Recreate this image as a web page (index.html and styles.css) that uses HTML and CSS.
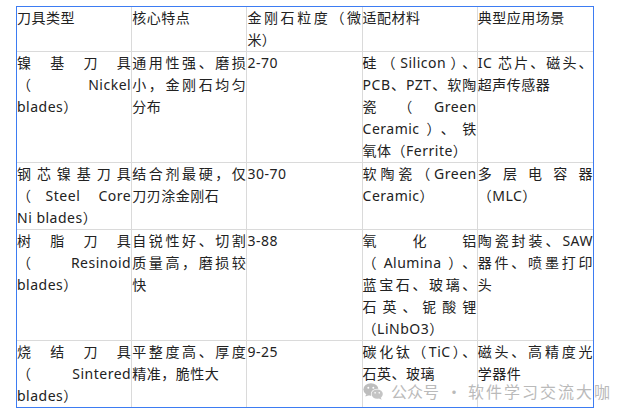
FILE: index.html
```html
<!DOCTYPE html>
<html lang="zh-CN">
<head>
<meta charset="utf-8">
<title>刀具类型</title>
<link rel="stylesheet" href="styles.css">
</head>
<body>
<div class="page">
  <table class="spec">
    <tr>
      <td>刀具类型</td>
      <td>核心特点</td>
      <td>金刚石粒度（微米）</td>
      <td>适配材料</td>
      <td>典型应用场景</td>
    </tr>
    <tr>
      <td>镍基刀具（Nickel blades）</td>
      <td>通用性强、磨损小，金刚石均匀分布</td>
      <td>2-70</td>
      <td>硅（Silicon）、PCB、PZT、软陶瓷（Green Ceramic）、铁<span class="nw">氧体</span>（Ferrite）</td>
      <td>IC 芯片、磁头、超声传感器</td>
    </tr>
    <tr>
      <td>钢芯镍基刀具（Steel Core Ni&nbsp;blades）</td>
      <td>结合剂最硬，仅刀刃涂金刚石</td>
      <td>30-70</td>
      <td>软陶瓷（Green Ceramic）</td>
      <td>多层电容器（MLC）</td>
    </tr>
    <tr>
      <td>树脂刀具（Resinoid blades）</td>
      <td>自锐性好、切割质量高，磨损较快</td>
      <td>3-88</td>
      <td>氧化铝（Alumina）、<span class="nw">蓝宝石</span>、玻璃、石英、铌酸锂（LiNbO3）</td>
      <td>陶瓷封装、SAW器件、喷墨打印头</td>
    </tr>
    <tr>
      <td>烧结刀具（Sintered blades）</td>
      <td>平整度高、厚度精准，脆性大</td>
      <td>9-25</td>
      <td>碳化钛（TiC）、石英、玻璃</td>
      <td>磁头、高精度光学器件</td>
    </tr>
  </table>
  <div class="mark">
    <svg class="wx" width="21" height="17" viewBox="0 0 23 19" aria-hidden="true">
      <ellipse cx="8.6" cy="7.2" rx="8.4" ry="7.0" fill="#bdbdbd"/>
      <path d="M3.2 12.2 L2.4 15.2 L6.4 13.6 Z" fill="#bdbdbd"/>
      <circle cx="5.7" cy="5.4" r="1.1" fill="#fff"/>
      <circle cx="11.3" cy="5.4" r="1.1" fill="#fff"/>
      <ellipse cx="15.6" cy="12.4" rx="7.1" ry="5.9" fill="#fff"/>
      <ellipse cx="15.6" cy="12.4" rx="6.3" ry="5.2" fill="#c4c4c4"/>
      <path d="M19.6 16.1 L20.6 18.7 L17.4 17.1 Z" fill="#c4c4c4"/>
      <circle cx="13.3" cy="11.0" r="0.9" fill="#fff"/>
      <circle cx="17.9" cy="11.0" r="0.9" fill="#fff"/>
    </svg>
    <span class="mark-label">公众号</span>
    <span class="mark-dot">·</span>
    <span class="mark-name">软件学习交流大咖</span>
  </div>
</div>
</body>
</html>
```

FILE: styles.css
```css
html, body {
  margin: 0;
  padding: 0;
  background: #ffffff;
}

.page {
  position: relative;
  width: 626px;
  height: 417px;
  padding: 6px 0 0 16px;
  box-sizing: border-box;
}

.spec {
  width: 578px;
  table-layout: fixed;
  border-collapse: separate;
  border-spacing: 0;
  border: 1px solid #3d7cf2;
  font-family: "Noto Sans", "Noto Sans CJK SC", sans-serif;
  font-size: 14px;
  letter-spacing: 0.5px;
  line-height: 22px;
  color: #222222;
}

.spec td {
  padding: 0;
  vertical-align: top;
  text-align: justify;
  border-right: 1px solid #dadada;
  border-bottom: 1px solid #dadada;
}

.spec tr td:last-child {
  border-right: none;
}

.spec tr:last-child td {
  border-bottom: none;
}

.nw {
  white-space: nowrap;
}

.mark {
  position: absolute;
  left: 363px;
  top: 381px;
  display: flex;
  align-items: center;
  color: #bababa;
  font-family: "Noto Sans CJK SC", sans-serif;
  font-size: 16px;
  line-height: 20px;
  white-space: nowrap;
}

.wx {
  display: block;
  margin-right: 7px;
}

.mark-dot {
  margin: 0 6px 0 7px;
}

.mark-name {
  letter-spacing: 2px;
}
```
